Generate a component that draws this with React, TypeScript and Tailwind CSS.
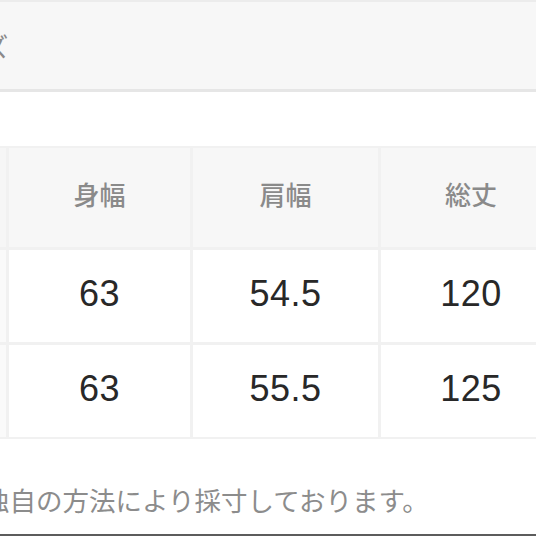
const jp = "font-['Noto_Sans_CJK_JP','Noto_Sans',sans-serif]";

const headers = ["身幅", "肩幅", "総丈"];
const rows = [
  ["63", "54.5", "120"],
  ["63", "55.5", "125"],
];

export default function App() {
  return (
    <div className={`flex h-[536px] w-[536px] flex-col overflow-hidden bg-white ${jp}`}>
      {/* Title band */}
      <div className="flex h-[92px] shrink-0 items-center overflow-hidden border-t-2 border-b-[3px] border-t-[#ececec] border-b-[#e6e6e6] bg-[#f7f7f7]">
        <span className="-ml-[69px] whitespace-nowrap text-[26px] text-[#8a8a8a]">サイズ</span>
      </div>

      <div className="h-[54px] shrink-0" />

      {/* Size table */}
      <div className="shrink-0 overflow-hidden">
        <div className="grid w-max grid-cols-[6px_181px_185px_180px] grid-rows-[99px_92px_92px] gap-[3px] bg-[#f1f1f1] py-[2px]">
          <div className="bg-[#f6f6f6]" />
          {headers.map((h) => (
            <div key={h} className="flex items-center justify-center bg-[#f7f7f7] pb-[8px] text-[26px] font-medium text-[#8a8a8a]">
              {h}
            </div>
          ))}
          {rows.map((row, i) => (
            <>
              <div key={`s${i}`} className="bg-[#fafafa]" />
              {row.map((v, j) => (
                <div
                  key={`${i}-${j}`}
                  className="flex items-center justify-center bg-white pb-[5px] font-['Liberation_Sans',sans-serif] text-[36px] tracking-[0.5px] text-[#282828]"
                >
                  {v}
                </div>
              ))}
            </>
          ))}
        </div>
      </div>

      {/* Note */}
      <div className="mt-[43px] h-[36px] shrink-0 overflow-hidden">
        <p className="-ml-[17px] whitespace-nowrap text-[26.5px] leading-[36px] text-[#8c8c8c]">
          独自の方法により採寸しております。
        </p>
      </div>

      <div className="flex-1" />
      <div className="h-[2px] shrink-0 bg-[#5c5c5c]" />
    </div>
  );
}
